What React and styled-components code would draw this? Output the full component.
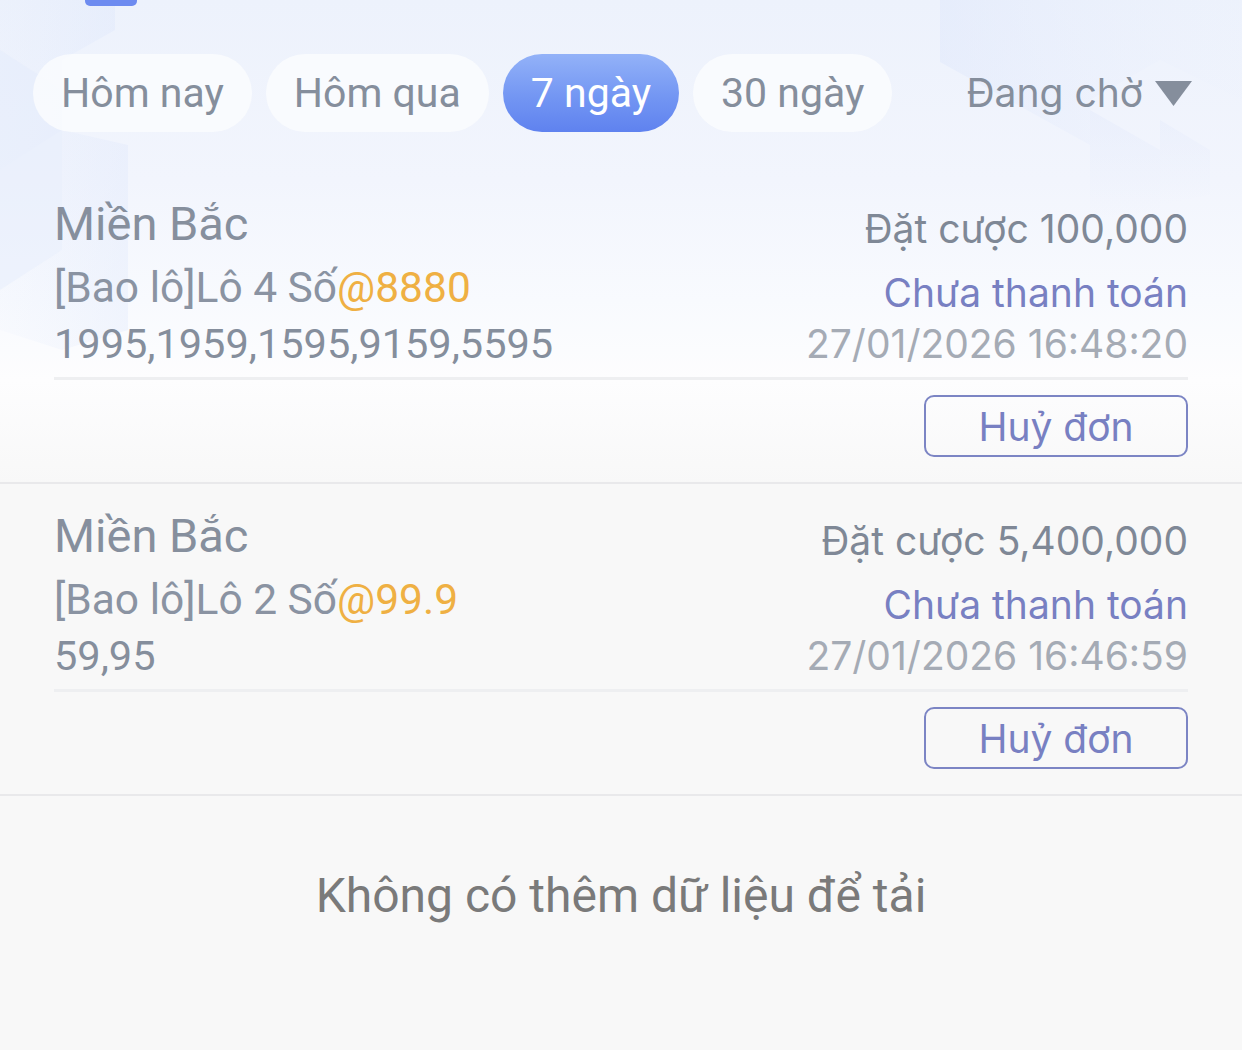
import React from 'react';
import styled, { createGlobalStyle } from 'styled-components';

const GlobalStyle = createGlobalStyle`
  html, body {
    margin: 0;
    padding: 0;
    background: #f8f8f8;
  }
  * {
    box-sizing: border-box;
  }
`;

const Page = styled.div`
  position: relative;
  width: 1242px;
  min-height: 1050px;
  overflow: hidden;
  font-family: Roboto, 'Noto Sans', sans-serif;
  background: linear-gradient(
    180deg,
    #edf2fc 0px,
    #f2f5fd 180px,
    #f8fafe 300px,
    #fdfdfe 380px,
    #f8f8f8 484px,
    #f8f8f8 100%
  );
`;

const Decor = styled.svg`
  position: absolute;
  top: 0;
  left: 0;
  pointer-events: none;
`;

const Content = styled.div`
  position: relative;
`;

const Indicator = styled.div`
  width: 52px;
  height: 6px;
  margin-left: 85px;
  border-radius: 0 0 5px 5px;
  background: #6d8bf0;
`;

const TabBar = styled.div`
  display: flex;
  align-items: center;
  gap: 14px;
  height: 78px;
  margin-top: 48px;
  padding: 0 50px 0 33px;
`;

const Tab = styled.div`
  height: 78px;
  padding: 0 28px;
  border-radius: 39px;
  font-size: 41px;
  line-height: 78px;
  white-space: nowrap;
  color: ${p => (p.$active ? '#ffffff' : '#858e9c')};
  background: ${p =>
    p.$active
      ? 'linear-gradient(180deg, #93b2f8 0%, #7396f3 55%, #5f82ef 100%)'
      : 'rgba(251, 252, 254, 0.8)'};
`;

const Filter = styled.div`
  margin-left: auto;
  display: flex;
  align-items: center;
  gap: 12px;
  font-family: Inter, Roboto, sans-serif;
  font-size: 39px;
  line-height: 78px;
  color: #858e9c;
`;

const List = styled.div`
  margin-top: 40px;
`;

const Card = styled.div`
  display: grid;
  grid-template-columns: 1fr auto;
  padding: 18px 54px 25px;
  border-bottom: 2px solid #e9e9eb;
`;

const Left = styled.div`
  display: flex;
  flex-direction: column;
`;

const Region = styled.div`
  font-size: 47px;
  line-height: 68px;
  color: #868f9d;
`;

const Play = styled.div`
  font-size: 42.5px;
  line-height: 60px;
  color: #8a93a2;
`;

const Odds = styled.span`
  color: #efb043;
`;

const Numbers = styled.div`
  font-size: 41.5px;
  line-height: 52px;
  color: #858e9c;
`;

const Right = styled.div`
  display: flex;
  flex-direction: column;
  align-items: flex-end;
  padding-top: 7px;
  font-family: Inter, Roboto, sans-serif;
  font-size: 39px;
`;

const Amount = styled.div`
  line-height: 64px;
  color: #7f8896;
`;

const Status = styled.div`
  line-height: 64px;
  color: #7880c2;
`;

const Time = styled.div`
  line-height: 38px;
  color: #a5abb5;
`;

const Divider = styled.div`
  grid-column: 1 / -1;
  height: 3px;
  margin-top: 7px;
  background: #eeeff1;
`;

const Actions = styled.div`
  grid-column: 1 / -1;
  display: flex;
  justify-content: flex-end;
  margin-top: 15px;
`;

const CancelButton = styled.button`
  width: 264px;
  height: 62px;
  padding: 0;
  border: 2.5px solid #7c85c4;
  border-radius: 10px;
  background: transparent;
  font-family: Inter, Roboto, sans-serif;
  font-size: 39px;
  color: #7880c2;
  cursor: pointer;
`;

const EndNote = styled.div`
  margin-top: 70px;
  text-align: center;
  font-size: 48px;
  line-height: 60px;
  color: #7a7a7a;
`;

const tabs = ['Hôm nay', 'Hôm qua', '7 ngày', '30 ngày'];

const orders = [
  {
    id: 1,
    region: 'Miền Bắc',
    play: '[Bao lô]Lô 4 Số',
    odds: '@8880',
    numbers: '1995,1959,1595,9159,5595',
    amount: '100,000',
    time: '27/01/2026 16:48:20'
  },
  {
    id: 2,
    region: 'Miền Bắc',
    play: '[Bao lô]Lô 2 Số',
    odds: '@99.9',
    numbers: '59,95',
    amount: '5,400,000',
    time: '27/01/2026 16:46:59'
  }
];

// faint hexagon shapes behind the filter bar
const Background = () => (
  <Decor width="1242" height="520" viewBox="0 0 1242 520">
    <defs>
      <linearGradient id="hexL" x1="0" y1="0" x2="1" y2="0">
        <stop offset="0" stopColor="#dfe8fb" stopOpacity="0.2" />
        <stop offset="1" stopColor="#dbe5fb" stopOpacity="0.7" />
      </linearGradient>
      <linearGradient id="hexR" x1="0" y1="0" x2="1" y2="0">
        <stop offset="0" stopColor="#dde6fb" stopOpacity="0.8" />
        <stop offset="1" stopColor="#e8eefc" stopOpacity="0.1" />
      </linearGradient>
      <linearGradient id="fadeDown" x1="0" y1="0" x2="0" y2="1">
        <stop offset="0" stopColor="#e2e9fb" stopOpacity="0.7" />
        <stop offset="1" stopColor="#e2e9fb" stopOpacity="0" />
      </linearGradient>
    </defs>
    <polygon points="0,0 115,0 115,30 62,60 62,130 0,170" fill="url(#hexL)" opacity="0.5" />
    <polygon points="0,50 62,90 62,250 0,290" fill="#e4ebfb" opacity="0.5" />
    <polygon points="62,130 128,145 128,330 62,350 0,330 0,290 62,250" fill="url(#hexL)" opacity="0.45" />
    <polygon points="940,0 1242,0 1242,100 1160,60 1090,100 1090,145 940,62" fill="url(#hexR)" opacity="0.55" />
    <polygon points="1090,110 1160,150 1160,210 1090,220" fill="url(#fadeDown)" opacity="0.6" />
    <polygon points="1160,120 1210,150 1210,195 1160,205" fill="url(#fadeDown)" opacity="0.5" />
  </Decor>
);

const Triangle = () => (
  <svg width="37" height="25" viewBox="0 0 37 25">
    <polygon points="0,0 37,0 18.5,25" fill="#858e9c" />
  </svg>
);

const OrderCard = ({ order }) => (
  <Card>
    <Left>
      <Region>{order.region}</Region>
      <Play>
        {order.play}
        <Odds>{order.odds}</Odds>
      </Play>
      <Numbers>{order.numbers}</Numbers>
    </Left>
    <Right>
      <Amount>Đặt cược {order.amount}</Amount>
      <Status>Chưa thanh toán</Status>
      <Time>{order.time}</Time>
    </Right>
    <Divider />
    <Actions>
      <CancelButton>Huỷ đơn</CancelButton>
    </Actions>
  </Card>
);

const App = () => (
  <Page>
    <GlobalStyle />
    <Background />
    <Content>
      <Indicator />
      <TabBar>
        {tabs.map(t => (
          <Tab key={t} $active={t === '7 ngày'}>
            {t}
          </Tab>
        ))}
        <Filter>
          Đang chờ
          <Triangle />
        </Filter>
      </TabBar>
      <List>
        {orders.map(o => (
          <OrderCard key={o.id} order={o} />
        ))}
      </List>
      <EndNote>Không có thêm dữ liệu để tải</EndNote>
    </Content>
  </Page>
);

export default App;
